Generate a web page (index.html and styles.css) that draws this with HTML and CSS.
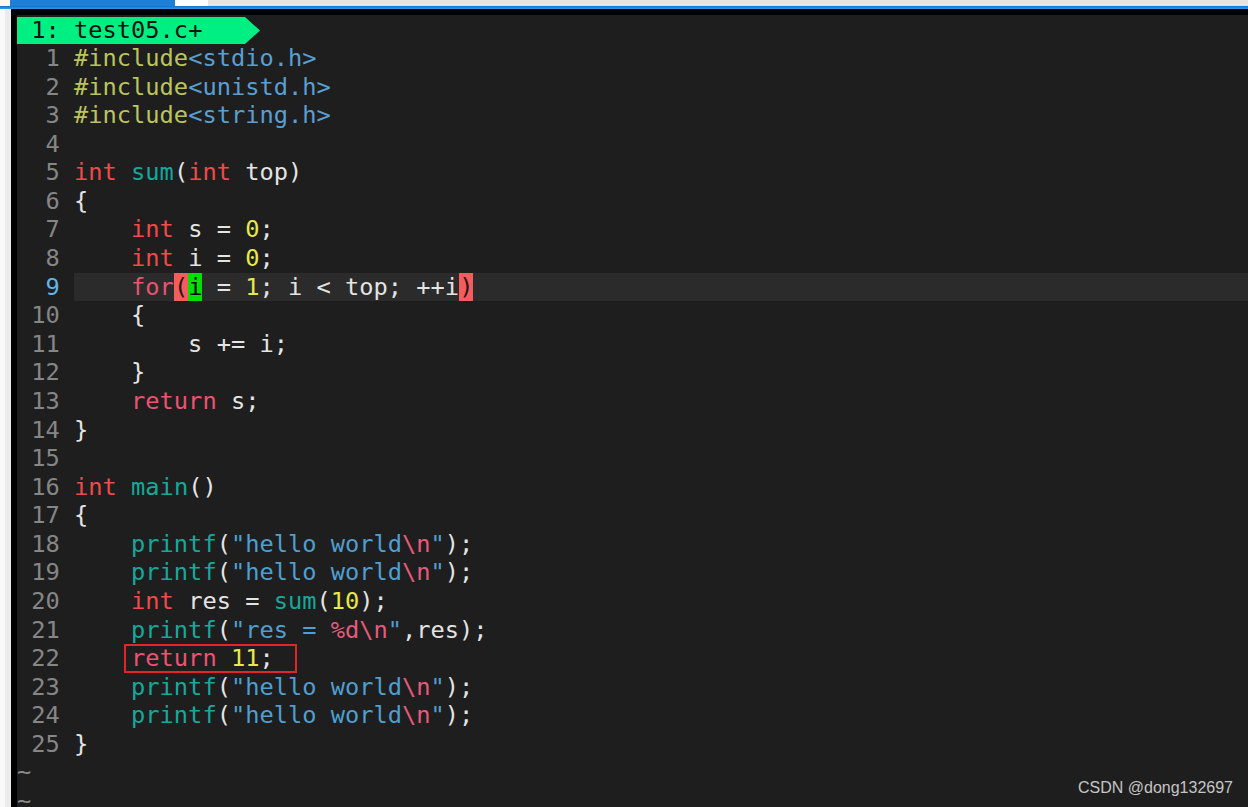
FILE: index.html
```html
<!DOCTYPE html>
<html lang="en">
<head>
    <meta charset="UTF-8">
    <meta name="viewport" content="width=device-width, initial-scale=1.0">
    <title>test05.c - vim</title>
    <link rel="stylesheet" href="styles.css">
</head>
<body>
    <div class="tabstrip">
        <div class="tab_gap"></div>
        <div class="tab_active"></div>
        <div class="tab_plain"></div>
    </div>
    <div class="accent"></div>
    <div class="window">
        <div class="side"></div>
        <div class="vim">
            <div class="tabline">
                <span class="tab_name"> 1: test05.c+</span>
            </div>
            <div class="buffer">
                <div class="row"><span class="ln">1</span><span class="code"><span class="pre">#include</span><span class="inc">&lt;stdio.h&gt;</span></span></div>
                <div class="row"><span class="ln">2</span><span class="code"><span class="pre">#include</span><span class="inc">&lt;unistd.h&gt;</span></span></div>
                <div class="row"><span class="ln">3</span><span class="code"><span class="pre">#include</span><span class="inc">&lt;string.h&gt;</span></span></div>
                <div class="row"><span class="ln">4</span><span class="code"></span></div>
                <div class="row"><span class="ln">5</span><span class="code"><span class="type">int</span> <span class="fn">sum</span>(<span class="type">int</span> top)</span></div>
                <div class="row"><span class="ln">6</span><span class="code">{</span></div>
                <div class="row"><span class="ln">7</span><span class="code">    <span class="type">int</span> s = <span class="num">0</span>;</span></div>
                <div class="row"><span class="ln">8</span><span class="code">    <span class="type">int</span> i = <span class="num">0</span>;</span></div>
                <div class="row cur"><span class="ln">9</span><span class="code">    <span class="kw">for</span><span class="match">(</span><span class="cursor">i</span> = <span class="num">1</span>; i &lt; top; ++i<span class="match">)</span></span></div>
                <div class="row"><span class="ln">10</span><span class="code">    {</span></div>
                <div class="row"><span class="ln">11</span><span class="code">        s += i;</span></div>
                <div class="row"><span class="ln">12</span><span class="code">    }</span></div>
                <div class="row"><span class="ln">13</span><span class="code">    <span class="kw">return</span> s;</span></div>
                <div class="row"><span class="ln">14</span><span class="code">}</span></div>
                <div class="row"><span class="ln">15</span><span class="code"></span></div>
                <div class="row"><span class="ln">16</span><span class="code"><span class="type">int</span> <span class="fn">main</span>()</span></div>
                <div class="row"><span class="ln">17</span><span class="code">{</span></div>
                <div class="row"><span class="ln">18</span><span class="code">    <span class="fn">printf</span>(<span class="str">"hello world<span class="esc">\n</span>"</span>);</span></div>
                <div class="row"><span class="ln">19</span><span class="code">    <span class="fn">printf</span>(<span class="str">"hello world<span class="esc">\n</span>"</span>);</span></div>
                <div class="row"><span class="ln">20</span><span class="code">    <span class="type">int</span> res = <span class="fn">sum</span>(<span class="num">10</span>);</span></div>
                <div class="row"><span class="ln">21</span><span class="code">    <span class="fn">printf</span>(<span class="str">"res = <span class="esc">%d\n</span>"</span>,res);</span></div>
                <div class="row"><span class="ln">22</span><span class="code">    <span class="mark"><span class="kw">return</span> <span class="num">11</span>;</span></span></div>
                <div class="row"><span class="ln">23</span><span class="code">    <span class="fn">printf</span>(<span class="str">"hello world<span class="esc">\n</span>"</span>);</span></div>
                <div class="row"><span class="ln">24</span><span class="code">    <span class="fn">printf</span>(<span class="str">"hello world<span class="esc">\n</span>"</span>);</span></div>
                <div class="row"><span class="ln">25</span><span class="code">}</span></div>
                <div class="row"><span class="tilde">~</span></div>
                <div class="row"><span class="tilde">~</span></div>
            </div>
            <div class="watermark">CSDN @dong132697</div>
        </div>
    </div>
</body>
</html>
```

FILE: styles.css
```css
body {
    margin: 0;
    height: 807px;
    overflow: hidden;
    background: #e4e4e4;
}

.tabstrip {
    display: flex;
    height: 6px;
    background: #e4e4e4;
}

.tab_gap {
    width: 10px;
    background: #f8f8f8;
}

.tab_active {
    width: 165px;
    background: #1d7fd6;
}

.tab_plain {
    width: 33px;
    background: #ffffff;
}

.accent {
    height: 3px;
    background: linear-gradient(#0a72cf, #3d98e2);
}

.window {
    display: flex;
    height: 798px;
}

.side {
    width: 5px;
    border-right: 6px solid #ebebeb;
    background: #f9f9f9;
}

.vim {
    position: relative;
    flex: 1;
    background: #1e1e1e;
    border-top: 6px solid #000;
    border-left: 6px solid #000;
    font-family: "DejaVu Sans Mono", monospace;
    font-size: 23.7px;
    color: #e4e4e4;
    overflow: hidden;
}

.tabline {
    height: 29px;
    padding-top: 1px;
    box-sizing: border-box;
}

.tab_name {
    display: inline-block;
    height: 27px;
    line-height: 27px;
    width: 243px;
    background: #00ef82;
    color: #111;
    white-space: pre;
    clip-path: polygon(0 0, 228px 0, 243px 50%, 228px 100%, 0 100%);
}

.row {
    display: flex;
    height: 28.58px;
    line-height: 28.58px;
    white-space: pre;
}

.ln {
    width: 3ch;
    margin-right: 1ch;
    text-align: right;
    color: #868686;
}

.code {
    flex: 1;
}

.cur .ln {
    color: #62b3e8;
}

.cur .code {
    background: #2b2b2b;
}

.pre { color: #bcc45c; }
.inc { color: #5a9fd4; }
.type { color: #f04a4a; }
.kw { color: #ec5370; }
.fn { color: #17a89c; }
.num { color: #e8e84a; }
.str { color: #4f9fd0; }
.esc { color: #e65a7c; }

.match {
    background: #f35d5d;
    color: #2a1414;
}

.cursor {
    background: #00e000;
    color: #000;
}

.mark {
    position: relative;
}

.mark::after {
    content: "";
    position: absolute;
    left: -7px;
    right: -23px;
    top: 0;
    bottom: -1px;
    border: 2px solid #e0262a;
}

.tilde {
    color: #8a8a8a;
}

.watermark {
    position: absolute;
    right: 15px;
    bottom: 10px;
    font-family: "Liberation Sans", Arial, sans-serif;
    font-size: 16px;
    color: rgba(255, 255, 255, 0.75);
}
```
